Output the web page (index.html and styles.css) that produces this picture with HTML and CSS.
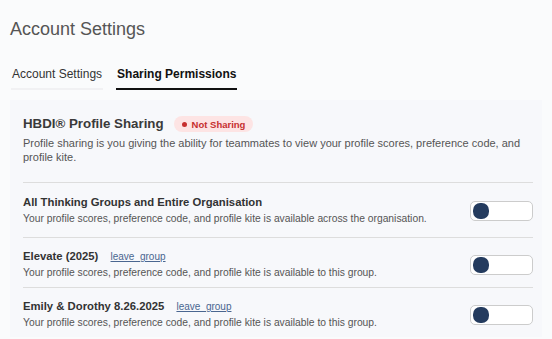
FILE: index.html
```html
<!DOCTYPE html>
<html lang="en">

<head>
	<meta charset="UTF-8">
	<meta name="viewport" content="width=device-width, initial-scale=1.0">
	<title>Account Settings</title>
	<link rel="stylesheet" href="styles.css">
</head>

<body>
	<h1 class="page-title">Account Settings</h1>

	<!-- Tabs -->
	<div class="tabs">
		<div class="tab">Account Settings</div>
		<div class="tab active">Sharing Permissions</div>
	</div>

	<div class="card">
		<div class="card-head">
			<h2>HBDI® Profile Sharing</h2>
			<span class="badge"><span class="dot"></span>Not Sharing</span>
		</div>
		<p class="intro">Profile sharing is you giving the ability for teammates to view your profile scores, preference code, and profile kite.</p>

		<div class="row row-first">
			<div class="row-text">
				<div class="row-title">All Thinking Groups and Entire Organisation</div>
				<div class="row-desc">Your profile scores, preference code, and profile kite is available across the organisation.</div>
			</div>
			<div class="toggle"><span class="knob"></span></div>
		</div>

		<div class="row">
			<div class="row-text">
				<div class="row-title">Elevate (2025) <a href="#">leave_group</a></div>
				<div class="row-desc">Your profile scores, preference code, and profile kite is available to this group.</div>
			</div>
			<div class="toggle"><span class="knob"></span></div>
		</div>

		<div class="row">
			<div class="row-text">
				<div class="row-title">Emily &amp; Dorothy 8.26.2025 <a href="#">leave_group</a></div>
				<div class="row-desc">Your profile scores, preference code, and profile kite is available to this group.</div>
			</div>
			<div class="toggle"><span class="knob"></span></div>
		</div>
	</div>
</body>

</html>
```

FILE: styles.css
```css
body {
	font-family: 'Liberation Sans', Arial, Helvetica, sans-serif;
	background-color: #fafbfc;
	color: #333333;
	margin: 0;
	padding: 0;
}

.page-title {
	font-size: 18px;
	font-weight: normal;
	line-height: 22px;
	color: #555555;
	margin: 18px 0 0 10px;
}

.tabs {
	display: flex;
	gap: 13px;
	margin: 26px 0 0 11px;
}

.tab {
	font-size: 12px;
	line-height: 16px;
	padding: 0 1px 6px;
	color: #333333;
	border-bottom: 2px solid #f1f1f3;
}

.tab.active {
	font-weight: bold;
	color: #111111;
	border-bottom-color: #111111;
}

.card {
	margin: 10px 10px 0;
	padding: 15px 9px 0 13px;
	background-color: #f7f8fb;
}

.card-head {
	display: flex;
	align-items: center;
	gap: 10px;
}

h2 {
	font-size: 13.3px;
	line-height: 18px;
	margin: 0;
	color: #3a3a3a;
}

.badge {
	display: inline-flex;
	align-items: center;
	height: 16px;
	padding: 0 8px 0 8px;
	border-radius: 8px;
	background-color: #fde4e4;
	color: #c62f2f;
	font-size: 9.5px;
	font-weight: bold;
}

.dot {
	width: 5px;
	height: 5px;
	border-radius: 50%;
	background-color: #c62f2f;
	margin-right: 5px;
}

.intro {
	font-size: 11px;
	line-height: 14px;
	color: #555555;
	margin: 3px 0 0;
	padding-bottom: 18px;
}

.row {
	display: flex;
	align-items: center;
	justify-content: space-between;
	border-top: 1px solid #dddddd;
	padding: 11px 0 7px;
}

.row-first {
	padding: 12px 0 11px;
}

.row-title {
	font-size: 11.3px;
	line-height: 15px;
	font-weight: bold;
	color: #333333;
}

.row-title a {
	font-size: 10px;
	font-weight: normal;
	color: #4a6690;
	margin-left: 9px;
}

.row-desc {
	font-size: 10.3px;
	line-height: 14px;
	color: #555555;
	margin-top: 2px;
}

.toggle {
	width: 57px;
	height: 16px;
	border: 1px solid #cccccc;
	border-radius: 5px;
	background-color: #ffffff;
	padding: 1px 2px;
	box-sizing: content-box;
	flex-shrink: 0;
}

.knob {
	display: block;
	width: 16px;
	height: 16px;
	border-radius: 45%;
	background-color: #243b5e;
}

a {
	color: #4a6690;
}
```
